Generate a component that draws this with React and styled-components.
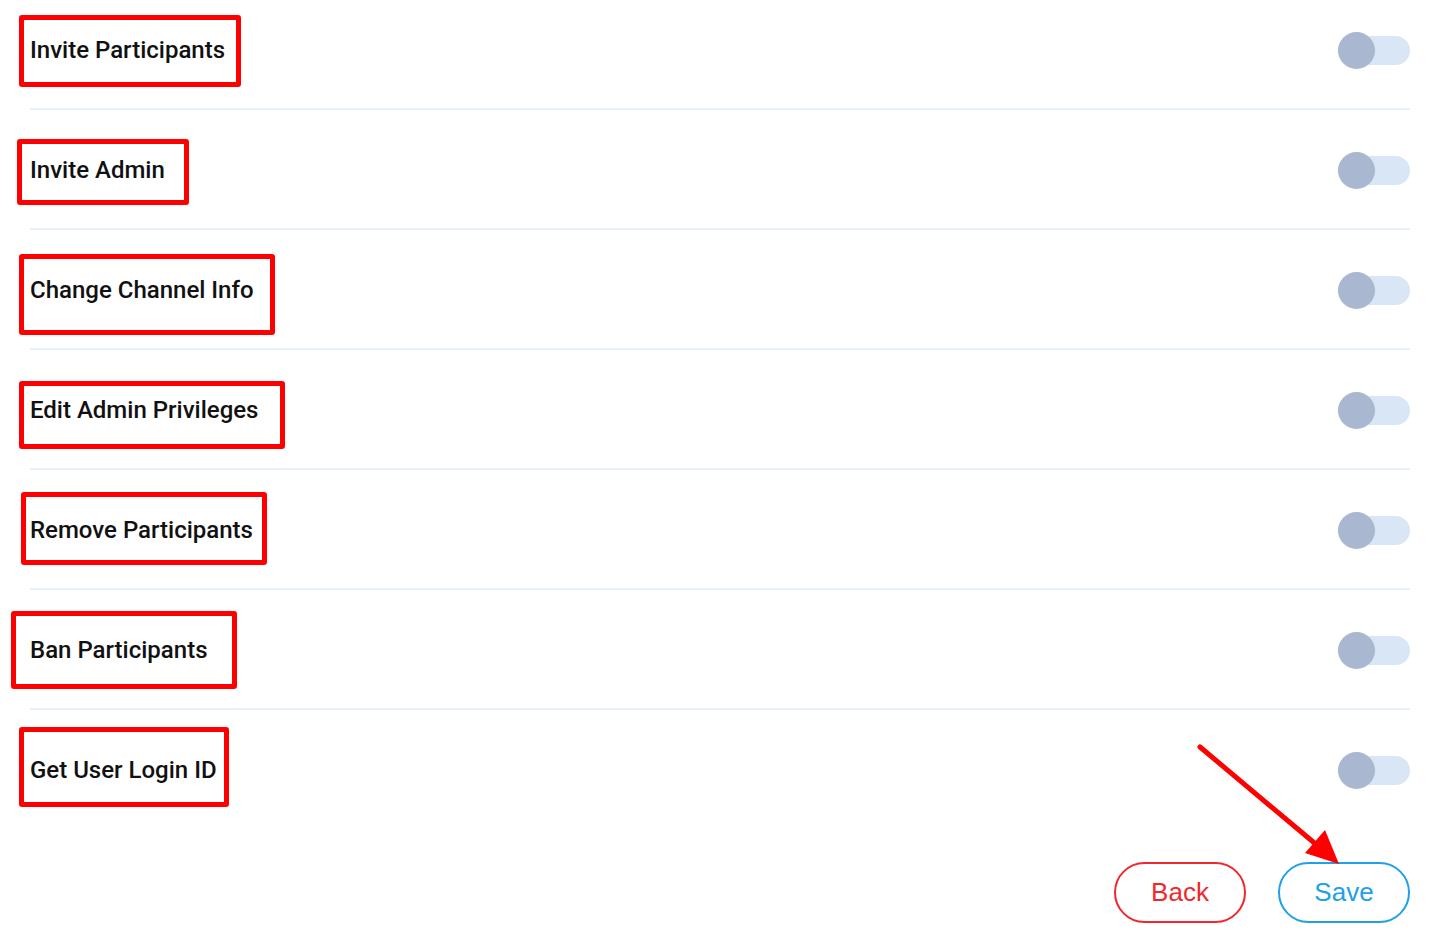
import React, { useState } from "react";
import styled, { createGlobalStyle } from "styled-components";

const Global = createGlobalStyle`
  body {
    margin: 0;
    background: #ffffff;
    font-family: Roboto, "Noto Sans", sans-serif;
  }
`;

const Page = styled.div`
  position: relative;
  width: 1438px;
  height: 950px;
  overflow: hidden;
  background: #fff;
`;

const List = styled.div`
  display: flex;
  flex-direction: column;
  padding: 0 28px 0 30px;
`;

const Row = styled.div`
  display: flex;
  align-items: center;
  justify-content: space-between;
  height: 100px;
`;

const Divider = styled.div`
  height: 2px;
  background: #e6effa;
  margin: 8px 0 10px;
`;

const Label = styled.span`
  font-size: 24px;
  font-weight: 500;
  color: #111;
`;

const Track = styled.button`
  position: relative;
  width: 72px;
  height: 29px;
  border: none;
  padding: 0;
  border-radius: 15px;
  background: ${({ on }) => (on ? "#b9d9f5" : "#d9e6f5")};
  cursor: pointer;
`;

const Knob = styled.span`
  position: absolute;
  top: 50%;
  left: ${({ on }) => (on ? "35px" : "0")};
  width: 37px;
  height: 37px;
  margin-top: -18.5px;
  border-radius: 50%;
  background: ${({ on }) => (on ? "#1fa0e8" : "#a9b7d0")};
`;

const Actions = styled.div`
  display: flex;
  justify-content: flex-end;
  gap: 32px;
  margin-top: 42px;
`;

const Button = styled.button`
  width: 132px;
  height: 61px;
  border-radius: 31px;
  background: #fff;
  border: 2px solid ${({ color }) => color};
  color: ${({ color }) => color};
  font-family: "Liberation Sans", Arial, sans-serif;
  font-size: 26px;
  cursor: pointer;
`;

const Box = styled.div`
  position: absolute;
  border: 5px solid #ff0000;
  border-radius: 3px;
  pointer-events: none;
`;

const Arrow = styled.svg`
  position: absolute;
  left: 0;
  top: 0;
  pointer-events: none;
`;

const items = [
  "Invite Participants",
  "Invite Admin",
  "Change Channel Info",
  "Edit Admin Privileges",
  "Remove Participants",
  "Ban Participants",
  "Get User Login ID",
];

const boxes = [
  [19, 15, 222, 72],
  [17, 139, 172, 66],
  [19, 254, 256, 81],
  [19, 381, 266, 68],
  [21, 492, 246, 73],
  [11, 611, 226, 78],
  [19, 727, 210, 80],
];

function Toggle() {
  const [on, setOn] = useState(false);
  return (
    <Track on={on ? 1 : 0} onClick={() => setOn(!on)}>
      <Knob on={on ? 1 : 0} />
    </Track>
  );
}

export default function App() {
  return (
    <Page>
      <Global />
      <List>
        {items.map((label, i) => (
          <React.Fragment key={label}>
            <Row>
              <Label>{label}</Label>
              <Toggle />
            </Row>
            {i < items.length - 1 && <Divider />}
          </React.Fragment>
        ))}
        <Actions>
          <Button color="#f0282e">Back</Button>
          <Button color="#20a0e6">Save</Button>
        </Actions>
      </List>
      {boxes.map(([x, y, w, h], i) => (
        <Box key={i} style={{ left: x, top: y, width: w - 10, height: h - 10 }} />
      ))}
      <Arrow width="1438" height="950">
        <line x1="1200" y1="747" x2="1318" y2="846" stroke="#ff0000" strokeWidth="5" strokeLinecap="round" />
        <polygon points="1339,864 1305,853 1325,830" fill="#ff0000" />
      </Arrow>
    </Page>
  );
}
